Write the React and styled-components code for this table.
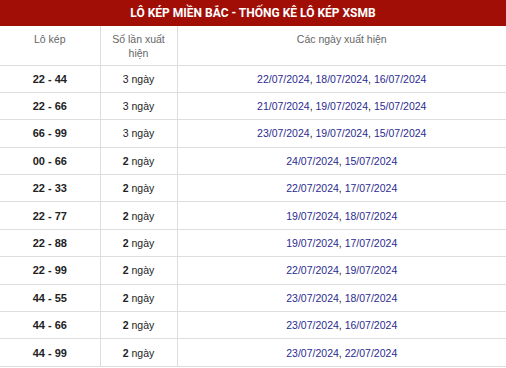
import styled, { createGlobalStyle } from "styled-components";

const Global = createGlobalStyle`
  body {
    margin: 0;
    background: #fff;
    font-family: "Liberation Sans", Arial, sans-serif;
  }
`;

const Wrap = styled.div`
  width: 506px;
`;

const Title = styled.div`
  height: 26px;
  background: #a10e06;
  color: #fff;
  font-family: Roboto, "Liberation Sans", sans-serif;
  font-weight: 700;
  font-size: 12px;
  display: flex;
  align-items: center;
  justify-content: center;
`;

const Table = styled.table`
  width: 100%;
  border-collapse: collapse;
  table-layout: fixed;
`;

const Th = styled.th`
  width: ${(p) => p.w || "auto"};
  height: 39px;
  padding: 6px 4px 0;
  vertical-align: top;
  font-weight: 400;
  font-size: 10.5px;
  line-height: 14px;
  color: #666;
  border-left: ${(p) => (p.first ? "none" : "1px solid #ddd")};
  border-bottom: 1px solid #ddd;
  box-sizing: border-box;
`;

const Td = styled.td`
  height: 27.4px;
  padding: 0;
  text-align: center;
  vertical-align: middle;
  font-size: ${(p) => (p.bold ? "11px" : "10.5px")};
  font-weight: ${(p) => (p.bold ? 700 : 400)};
  color: #222;
  border-left: ${(p) => (p.first ? "none" : "1px solid #ddd")};
  border-bottom: 1px solid #ddd;
  box-sizing: border-box;
`;

const Count = styled.span`
  font-weight: ${(p) => (p.strong ? 700 : 400)};
  color: #222;
`;

const DateLink = styled.span`
  color: #2b2b8f;
`;

const rows = [
  ["22 - 44", 3, ["22/07/2024", "18/07/2024", "16/07/2024"]],
  ["22 - 66", 3, ["21/07/2024", "19/07/2024", "15/07/2024"]],
  ["66 - 99", 3, ["23/07/2024", "19/07/2024", "15/07/2024"]],
  ["00 - 66", 2, ["24/07/2024", "15/07/2024"]],
  ["22 - 33", 2, ["22/07/2024", "17/07/2024"]],
  ["22 - 77", 2, ["19/07/2024", "18/07/2024"]],
  ["22 - 88", 2, ["19/07/2024", "17/07/2024"]],
  ["22 - 99", 2, ["22/07/2024", "19/07/2024"]],
  ["44 - 55", 2, ["23/07/2024", "18/07/2024"]],
  ["44 - 66", 2, ["23/07/2024", "16/07/2024"]],
  ["44 - 99", 2, ["23/07/2024", "22/07/2024"]],
];

export default function App() {
  return (
    <Wrap>
      <Global />
      <Title>LÔ KÉP MIỀN BẮC - THỐNG KÊ LÔ KÉP XSMB</Title>
      <Table>
        <thead>
          <tr>
            <Th first w="100px">Lô kép</Th>
            <Th w="77px">
              Số lần xuất
              <br />
              hiện
            </Th>
            <Th>Các ngày xuất hiện</Th>
          </tr>
        </thead>
        <tbody>
          {rows.map(([pair, count, dates]) => (
            <tr key={pair}>
              <Td first bold>
                {pair}
              </Td>
              <Td>
                <Count strong={count === 2}>{count}</Count> ngày
              </Td>
              <Td>
                {dates.map((d, i) => (
                  <span key={d}>
                    {i > 0 && ", "}
                    <DateLink>{d}</DateLink>
                  </span>
                ))}
              </Td>
            </tr>
          ))}
        </tbody>
      </Table>
    </Wrap>
  );
}
